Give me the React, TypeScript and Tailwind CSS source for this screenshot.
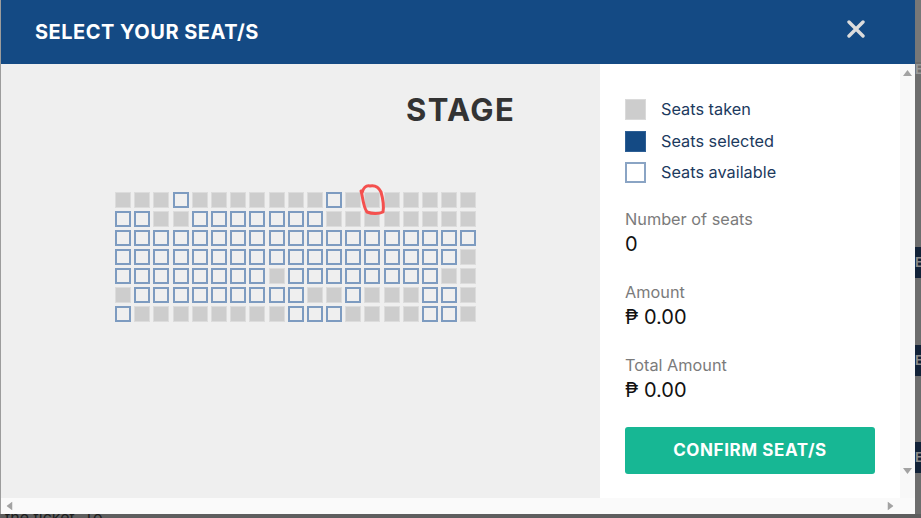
import React from "react";

type Seat = "T" | "A";

const ROWS: string[] = [
  "TTTATTTTTTTATTTTTTT",
  "AATTAAAAAAATTTTTTTT",
  "AAAAAAAAAAAAAAAAAAA",
  "AAAAAAAAAAAAAAAAAAT",
  "AAAAAAAATAAAAAAAATT",
  "TAAAAAAAAATTATTTAAT",
  "ATTTTTTTTAAATTTTAAT",
];

function SeatBox({ kind }: { kind: Seat }) {
  if (kind === "T") {
    return <div className="w-4 h-4 bg-[#cdcdcd] border border-[#dcdcdc]" />;
  }
  return <div className="w-4 h-4 border-2 border-[#7d9bc0] cursor-pointer" />;
}

function Legend({ box, label }: { box: React.ReactNode; label: string }) {
  return (
    <div className="flex items-center h-[21px]">
      {box}
      <span className="ml-[15px] text-[16.3px] text-[#1c3a5e]">{label}</span>
    </div>
  );
}

function Stat({ label, value, className = "" }: { label: string; value: string; className?: string }) {
  return (
    <div className={className}>
      <div className="text-[16.3px] leading-[20px] text-[#7b7b7b]">{label}</div>
      <div className="mt-[3px] text-[20px] leading-[24px] text-[#111]">{value}</div>
    </div>
  );
}

function UpArrow() {
  return (
    <svg width="9" height="6" viewBox="0 0 9 6">
      <path d="M0 6 L4.5 0 L9 6 Z" fill="#a3a3a3" />
    </svg>
  );
}

function BackdropTab() {
  return (
    <div className="h-[31px] bg-[#122238] overflow-hidden text-[13px] leading-[31px] text-[#8a8a8a] font-bold">
      E
    </div>
  );
}

export default function App() {
  return (
    <div
      className="w-[921px] h-[518px] overflow-hidden bg-[#6b6b6b] flex flex-col"
      style={{ fontFamily: "Inter, 'Open Sans', sans-serif" }}
    >
      <div className="flex h-[514px]">
        <div className="w-px bg-[#9c9c9c]" />
        <div className="w-[914px] flex flex-col">
          {/* header */}
          <div className="h-[64px] bg-[#144a84] flex items-center justify-between pl-[34px] pr-[50px]">
            <h1 className="text-white font-bold text-[20px] tracking-[0.5px]">SELECT YOUR SEAT/S</h1>
            <button className="mb-[7px]" aria-label="close">
              <svg width="18" height="18" viewBox="0 0 18 18">
                <path d="M2 2 L16 16 M16 2 L2 16" stroke="#dcdcdc" strokeWidth="3.4" strokeLinecap="round" />
              </svg>
            </button>
          </div>

          {/* body */}
          <div className="flex h-[434px]">
            <div className="relative w-[599px] bg-[#efefef]">
              <div className="pt-[30px] pl-[405px]">
                <div className="text-[31px] leading-none font-bold text-[#333] tracking-[1.4px]">STAGE</div>
              </div>
              <div className="mt-[67px] ml-[114px] grid grid-cols-[repeat(19,16px)] gap-x-[3.2px] gap-y-[3px] w-max">
                {ROWS.flatMap((row, r) =>
                  row.split("").map((c, i) => <SeatBox key={`${r}-${i}`} kind={c as Seat} />)
                )}
              </div>
              {/* hand-drawn marker around a seat */}
              <svg className="absolute left-[354px] top-[117px]" width="36" height="40" viewBox="0 0 36 40">
                <path
                  d="M7 12 C8 7 11 4 15 5 C20 4 24 7 26 11 C28 18 29 25 28 31 C24 33 17 33 12 31 C9 27 8 20 7 14 L6 10"
                  fill="none"
                  stroke="#f4504e"
                  strokeWidth="3"
                  strokeLinecap="round"
                  strokeLinejoin="round"
                />
              </svg>
            </div>

            <div className="w-[300px] bg-white pl-[25px] pr-[25px] pt-[35px] flex flex-col">
              <div className="flex flex-col gap-[10.5px]">
                <Legend box={<div className="w-[21px] h-[21px] bg-[#cdcdcd] border border-[#dadada]" />} label="Seats taken" />
                <Legend box={<div className="w-[21px] h-[21px] bg-[#144a84] border border-[#2d5f95]" />} label="Seats selected" />
                <Legend box={<div className="w-[21px] h-[21px] bg-white border-2 border-[#8aa4c4]" />} label="Seats available" />
              </div>
              <Stat className="mt-[26px]" label="Number of seats" value="0" />
              <Stat className="mt-[26px]" label="Amount" value="₱ 0.00" />
              <Stat className="mt-[26px]" label="Total Amount" value="₱ 0.00" />
              <button className="mt-[25px] h-[47px] w-[250px] rounded-[3px] bg-[#17b794] text-white font-bold text-[17px] tracking-[0.6px]">
                CONFIRM SEAT/S
              </button>
            </div>

            {/* vertical scrollbar */}
            <div className="w-[15px] bg-[#f8f8f8] flex flex-col items-center justify-between pt-[6px] pb-[24px]">
              <UpArrow />
              <div className="rotate-180">
                <UpArrow />
              </div>
            </div>
          </div>

          {/* horizontal scrollbar */}
          <div className="h-[16px] bg-[#fafafa] flex items-center justify-between pl-[4px] pr-[20px]">
            <div className="-rotate-90">
              <UpArrow />
            </div>
            <div className="rotate-90">
              <UpArrow />
            </div>
          </div>
        </div>

        {/* page behind the dialog */}
        <div className="w-[6px] flex flex-col bg-[#6d6d6d] overflow-hidden">
          <div className="h-[62px] bg-[#777]" />
          <div className="h-[14px] overflow-hidden text-[13px] leading-[14px] text-[#999] font-bold">E</div>
          <div className="h-[171px]" />
          <BackdropTab />
          <div className="h-[67px]" />
          <BackdropTab />
          <div className="h-[66px]" />
          <BackdropTab />
        </div>
      </div>
      <div className="h-[4px] bg-[#5e5e5e] overflow-hidden">
        <div className="-mt-[7px] pl-[5px] text-[16px] leading-[20px] text-[#1d1d1d]">the ticket. To</div>
      </div>
    </div>
  );
}
